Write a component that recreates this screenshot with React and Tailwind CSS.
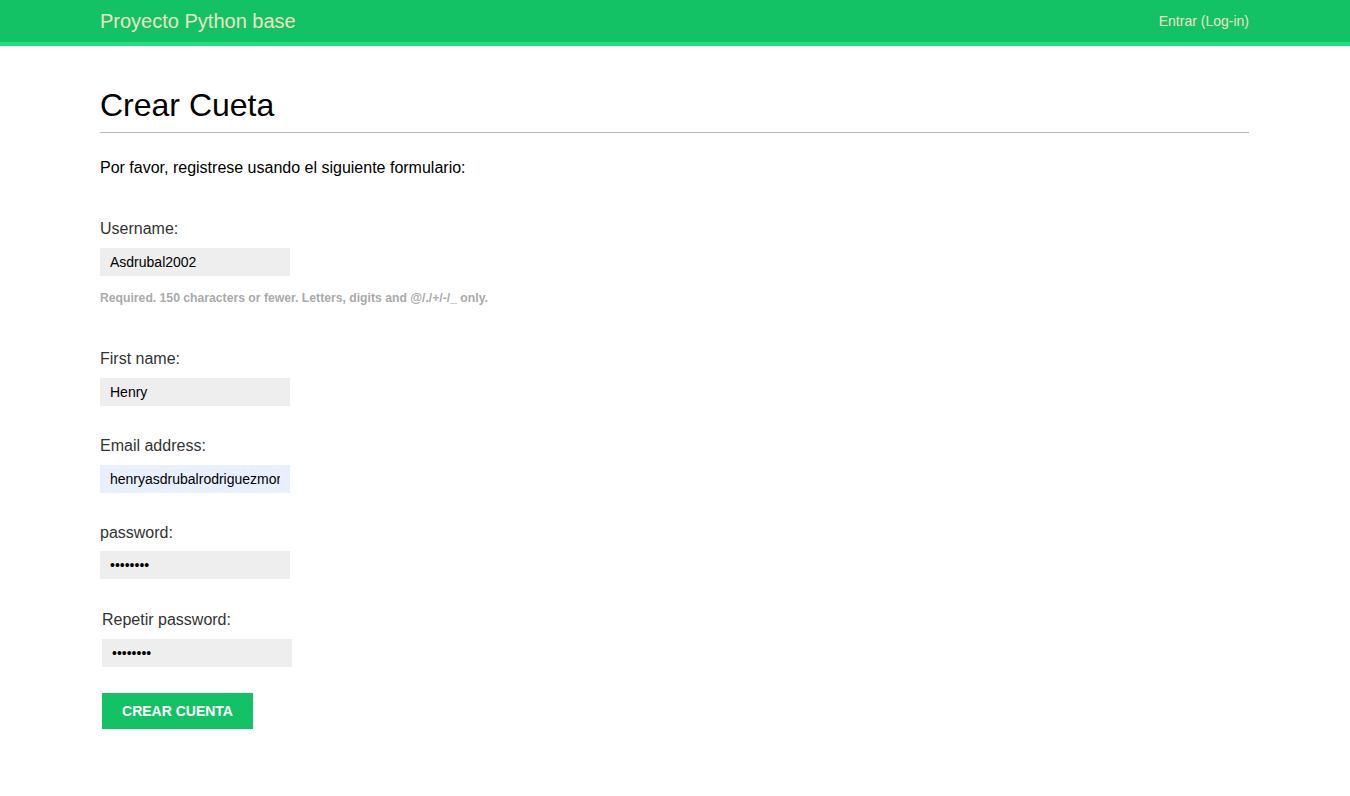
import React, { useState } from "react";

export default function App() {
  const [form, setForm] = useState({
    username: "Asdrubal2002",
    firstName: "Henry",
    email: "henryasdrubalrodriguezmoreno@gmail.com",
    password: "12345678",
    password2: "12345678",
  });

  const inputCls =
    "block w-[190px] h-[28px] px-[10px] text-[14px] text-black outline-none border-0";

  return (
    <div className="min-h-screen bg-white font-['Liberation_Sans',Arial,sans-serif]">
      {/* Barra superior */}
      <header className="bg-[#12c264] border-b-4 border-[#22e07c]">
        <div className="ml-[100px] mr-[101px] h-[42px] flex items-center justify-between">
          <span className="text-[20px] text-[#f0e2c4]">Proyecto Python base</span>
          <a href="#" className="text-[14px] text-[#f0e2c4] pt-[1px]">Entrar (Log-in)</a>
        </div>
      </header>

      <main className="ml-[100px] mr-[101px]">
        <h1 className="text-[32px] text-black leading-none pt-[43px] pb-[11px] border-b border-[#bbbbbb]">
          Crear Cueta
        </h1>
        <p className="text-[16px] text-black mt-[23px]">Por favor, registrese usando el siguiente formulario:</p>

        <form className="mt-[40px]" onSubmit={e => e.preventDefault()}>
          <label className="block text-[16px] text-[#333333] leading-[18px]">Username:</label>
          <input
            className={inputCls + " bg-[#eeeeee] mt-[10px]"}
            value={form.username}
            onChange={e => setForm({ ...form, username: e.target.value })}
          />
          <div className="mt-[15px] text-[12.2px] font-bold text-[#aaaaaa] leading-[14px]">
            Required. 150 characters or fewer. Letters, digits and @/./+/-/_ only.
          </div>

          <label className="block text-[16px] text-[#333333] leading-[18px] mt-[45px]">First name:</label>
          <input
            className={inputCls + " bg-[#eeeeee] mt-[10px]"}
            value={form.firstName}
            onChange={e => setForm({ ...form, firstName: e.target.value })}
          />

          <label className="block text-[16px] text-[#333333] leading-[18px] mt-[31px]">Email address:</label>
          <input
            className={inputCls + " bg-[#e8f0fe] mt-[10px]"}
            value={form.email}
            onChange={e => setForm({ ...form, email: e.target.value })}
          />

          <label className="block text-[16px] text-[#333333] leading-[18px] mt-[31px]">password:</label>
          <input
            type="password"
            className={inputCls + " bg-[#eeeeee] mt-[9px]"}
            value={form.password}
            onChange={e => setForm({ ...form, password: e.target.value })}
          />

          <div className="ml-[2px]">
            <label className="block text-[16px] text-[#333333] leading-[18px] mt-[32px]">Repetir password:</label>
            <input
              type="password"
              className={inputCls + " bg-[#eeeeee] mt-[10px]"}
              value={form.password2}
              onChange={e => setForm({ ...form, password2: e.target.value })}
            />
            <button
              type="submit"
              className="mt-[26px] w-[151px] h-[36px] bg-[#12c264] text-white text-[14px] font-bold uppercase"
            >
              Crear cuenta
            </button>
          </div>
        </form>
      </main>
    </div>
  );
}
